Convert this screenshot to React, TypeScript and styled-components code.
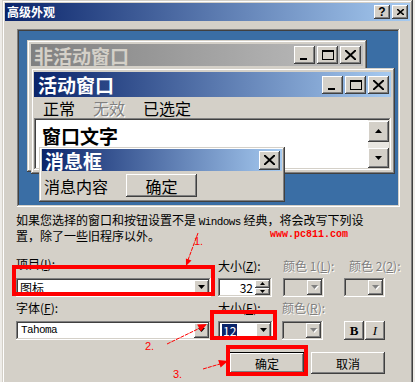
import React from "react";
import styled, { createGlobalStyle, css } from "styled-components";

const face = "#d4d0c8";
const light = "#ffffff";
const shade = "#808080";
const dark = "#404040";

const raised = css`
  box-shadow: inset -1px -1px ${dark}, inset 1px 1px ${light},
    inset -2px -2px ${shade}, inset 2px 2px ${face};
`;

const windowEdge = css`
  box-shadow: inset -1px -1px ${dark}, inset 1px 1px ${face},
    inset -2px -2px ${shade}, inset 2px 2px ${light};
`;

const sunken = css`
  box-shadow: inset -1px -1px ${light}, inset 1px 1px ${shade},
    inset -2px -2px ${face}, inset 2px 2px ${dark};
`;

const GlobalStyle = createGlobalStyle`
  html, body {
    margin: 0;
    padding: 0;
  }
  body {
    background: #eeece8;
    font-family: "Noto Sans CJK SC", "Liberation Sans", sans-serif;
    font-size: 12px;
    color: #000;
  }
`;

const Screen = styled.div`
  position: relative;
  width: 415px;
  height: 382px;
  overflow: hidden;
  padding-left: 2px;
  box-sizing: border-box;
`;

const Dialog = styled.div`
  width: 411px;
  height: 386px;
  box-sizing: border-box;
  padding: 3px;
  background: ${face};
  ${windowEdge}
  display: flex;
  flex-direction: column;
`;

const TitleBar = styled.div<{ $active?: boolean; $h: number; $left?: number }>`
  height: ${(p) => p.$h}px;
  flex-shrink: 0;
  display: flex;
  align-items: center;
  justify-content: space-between;
  padding: 0 2px 0 ${(p) => p.$left ?? 2}px;
  background: ${(p) =>
    p.$active
      ? "linear-gradient(to right, #0a246a, #a6caf0)"
      : "linear-gradient(to right, #808080, #c0c0c0)"};
`;

const TitleText = styled.span<{ $size: number; $active?: boolean }>`
  font-size: ${(p) => p.$size}px;
  font-weight: bold;
  line-height: 1;
  white-space: nowrap;
  color: ${(p) => (p.$active ? "#fff" : face)};
`;

const TitleButtons = styled.div<{ $gap: number }>`
  display: flex;
  gap: ${(p) => p.$gap}px;
`;

const CapButton = styled.div<{ $w: number; $h: number }>`
  width: ${(p) => p.$w}px;
  height: ${(p) => p.$h}px;
  background: ${face};
  ${raised}
  display: flex;
  align-items: center;
  justify-content: center;
  font-family: "Liberation Sans", sans-serif;
  font-weight: bold;
  font-size: 12px;
  line-height: 1;
`;

const Body = styled.div`
  display: flex;
  flex-direction: column;
`;

const Preview = styled.div`
  position: relative;
  flex-shrink: 0;
  margin: 8px 0 0 12px;
  width: 383px;
  height: 178px;
  background: #3a6ea5;
  ${sunken}
`;

const Frame = styled.div<{ $x: number; $y: number; $w: number; $h?: number; $pad: string }>`
  position: absolute;
  left: ${(p) => p.$x}px;
  top: ${(p) => p.$y}px;
  width: ${(p) => p.$w}px;
  height: ${(p) => (p.$h ? `${p.$h}px` : "auto")};
  box-sizing: border-box;
  padding: ${(p) => p.$pad};
  background: ${face};
  ${windowEdge}
  display: flex;
  flex-direction: column;
`;

const MenuBar = styled.div`
  height: 21px;
  display: flex;
  align-items: center;
  gap: 18px;
  padding-left: 9px;
  font-size: 16px;
  line-height: 1;
`;

const MenuItem = styled.span<{ $disabled?: boolean }>`
  color: ${(p) => (p.$disabled ? shade : "#000")};
  text-shadow: ${(p) => (p.$disabled ? "1px 1px #fff" : "none")};
`;

const TextPane = styled.div`
  height: 52px;
  box-sizing: border-box;
  padding: 2px;
  background: #fff;
  ${sunken}
  display: flex;
`;

const PaneText = styled.div`
  flex: 1;
  padding: 6px 0 0 6px;
  font-size: 19px;
  font-weight: bold;
  line-height: 1;
`;

const ScrollBar = styled.div`
  width: 21px;
  display: flex;
  flex-direction: column;
  justify-content: space-between;
  padding-top: 1px;
  background: #e9e7e2;
`;

const ScrollButton = styled.div<{ $h: number }>`
  height: ${(p) => p.$h}px;
  background: ${face};
  ${raised}
  display: flex;
  align-items: center;
  justify-content: center;
`;

const MsgBody = styled.div`
  flex: 1;
  display: flex;
  align-items: center;
  padding: 1px 0 0 2px;
  font-size: 16px;
  line-height: 1;
`;

const MsgButton = styled.div`
  margin-left: 18px;
  width: 71px;
  height: 23px;
  background: ${face};
  ${raised}
  display: flex;
  align-items: center;
  justify-content: center;
`;

const Hint = styled.p`
  margin: 6px 0 0 11px;
  font-size: 12px;
  line-height: 13px;
  white-space: nowrap;
`;

const Mono = styled.span`
  font-family: "Liberation Mono", monospace;
  font-size: 11px;
  letter-spacing: -0.6px;
`;

const FieldRow = styled.div<{ $top: number }>`
  display: flex;
  align-items: flex-end;
  margin: ${(p) => p.$top}px 0 0 11px;
`;

const Field = styled.div<{ $w: number; $ml?: number; $gap: number }>`
  width: ${(p) => p.$w}px;
  margin-left: ${(p) => p.$ml ?? 0}px;
  display: flex;
  flex-direction: column;
  gap: ${(p) => p.$gap}px;
`;

const Label = styled.span<{ $disabled?: boolean; $indent?: number }>`
  height: 14px;
  line-height: 14px;
  font-size: 12px;
  white-space: nowrap;
  padding-left: ${(p) => p.$indent ?? 0}px;
  color: ${(p) => (p.$disabled ? shade : "#000")};
  text-shadow: ${(p) => (p.$disabled ? "1px 1px #fff" : "none")};
`;

const Combo = styled.div<{ $disabled?: boolean }>`
  height: 19px;
  box-sizing: border-box;
  padding: 2px;
  background: ${(p) => (p.$disabled ? face : "#fff")};
  ${sunken}
  display: flex;
`;

const ComboValue = styled.span<{ $mono?: boolean }>`
  flex: 1;
  display: flex;
  align-items: center;
  padding-left: ${(p) => (p.$mono ? 3 : 2)}px;
  font-size: ${(p) => (p.$mono ? 11 : 12)}px;
  font-family: ${(p) =>
    p.$mono ? `"Liberation Mono", monospace` : `"Noto Sans CJK SC", sans-serif`};
  letter-spacing: ${(p) => (p.$mono ? "-0.6px" : "0")};
  line-height: 1;
`;

const DropButton = styled.span`
  width: 15px;
  background: ${face};
  ${raised}
  display: flex;
  align-items: center;
  justify-content: center;
`;

const Selected = styled.span`
  background: #0a246a;
  color: #fff;
  padding: 0 1px;
  line-height: 13px;
`;

const Spin = styled.div`
  width: 54px;
  height: 19px;
  box-sizing: border-box;
  padding: 2px;
  background: #fff;
  ${sunken}
  display: flex;
`;

const SpinValue = styled.span`
  flex: 1;
  text-align: right;
  padding-right: 2px;
  line-height: 15px;
  font-size: 12px;
`;

const SpinButtons = styled.div`
  width: 15px;
  display: flex;
  flex-direction: column;
`;

const SpinButton = styled.span`
  flex: 1;
  background: ${face};
  ${raised}
  display: flex;
  align-items: center;
  justify-content: center;
`;

const StyleGroup = styled.div`
  display: flex;
  gap: 1px;
`;

const StyleButton = styled.div<{ $italic?: boolean }>`
  width: 20px;
  height: 19px;
  background: ${face};
  ${raised}
  display: flex;
  align-items: center;
  justify-content: center;
  font-family: "Liberation Serif", serif;
  font-size: 13px;
  font-weight: ${(p) => (p.$italic ? "normal" : "bold")};
  font-style: ${(p) => (p.$italic ? "italic" : "normal")};
`;

const Actions = styled.div`
  display: flex;
  justify-content: flex-end;
  gap: 6px;
  margin: 12px 25px 0 0;
`;

const PushButton = styled.div<{ $default?: boolean; $w: number }>`
  width: ${(p) => p.$w}px;
  height: 22px;
  box-sizing: border-box;
  background: ${face};
  display: flex;
  align-items: center;
  justify-content: center;
  font-size: 12px;
  ${(p) =>
    p.$default
      ? css`
          box-shadow: inset 0 0 0 1px #000, inset -2px -2px ${dark},
            inset 2px 2px ${light}, inset -3px -3px ${shade};
        `
      : raised}
`;

const Mark = styled.div<{ $x: number; $y: number; $w: number; $h: number }>`
  position: absolute;
  left: ${(p) => p.$x}px;
  top: ${(p) => p.$y}px;
  width: ${(p) => p.$w}px;
  height: ${(p) => p.$h}px;
  box-sizing: border-box;
  border: 4px solid #ff0000;
  pointer-events: none;
`;

const Tag = styled.span<{ $x: number; $y: number }>`
  position: absolute;
  left: ${(p) => p.$x}px;
  top: ${(p) => p.$y}px;
  color: #ff0000;
  font-family: "Liberation Sans", sans-serif;
  font-size: 11px;
  line-height: 1;
`;

const Watermark = styled.span`
  position: absolute;
  left: 270px;
  top: 230px;
  color: #ff0000;
  font-family: "Liberation Mono", monospace;
  font-size: 10px;
  font-weight: bold;
  line-height: 1;
`;

const Arrows = styled.svg`
  position: absolute;
  left: 0;
  top: 0;
  pointer-events: none;
`;

function CloseGlyph({ w, h, s }: { w: number; h: number; s: number }) {
  return (
    <svg width={w} height={h} viewBox={`0 0 ${w} ${h}`}>
      <path d={`M0 0 L${w} ${h} M${w} 0 L0 ${h}`} stroke="#000" strokeWidth={s} />
    </svg>
  );
}

function MinGlyph() {
  return (
    <svg width="11" height="10" viewBox="0 0 11 10" shapeRendering="crispEdges">
      <rect x="1" y="8" width="7" height="2" fill="#000" />
    </svg>
  );
}

function MaxGlyph() {
  return (
    <svg width="12" height="10" viewBox="0 0 12 10" shapeRendering="crispEdges">
      <rect x="0.5" y="0.5" width="11" height="9" fill="none" stroke="#000" />
      <rect x="0" y="0" width="12" height="2" fill="#000" />
    </svg>
  );
}

function Tri({ up, grey }: { up?: boolean; grey?: boolean }) {
  const pts = up ? "0,4 7,4 3.5,0" : "0,0 7,0 3.5,4";
  return (
    <svg width="8" height="5" viewBox="0 0 8 5">
      {grey && <polygon points={pts} fill="#fff" transform="translate(1 1)" />}
      <polygon points={pts} fill={grey ? shade : "#000"} />
    </svg>
  );
}

function TinyTri({ up }: { up?: boolean }) {
  return (
    <svg width="5" height="3" viewBox="0 0 5 3">
      <polygon points={up ? "0,3 5,3 2.5,0" : "0,0 5,0 2.5,3"} fill="#000" />
    </svg>
  );
}

function WindowButtons({ gap }: { gap: number }) {
  return (
    <TitleButtons $gap={gap}>
      <CapButton $w={21} $h={18}>
        <MinGlyph />
      </CapButton>
      <CapButton $w={21} $h={18}>
        <MaxGlyph />
      </CapButton>
      <CapButton $w={21} $h={18}>
        <CloseGlyph w={11} h={10} s={2} />
      </CapButton>
    </TitleButtons>
  );
}

function Drop({ disabled }: { disabled?: boolean }) {
  return (
    <DropButton>
      <Tri grey={disabled} />
    </DropButton>
  );
}

export default function App() {
  return (
    <>
      <GlobalStyle />
      <Screen>
        <Dialog>
          <TitleBar $active $h={18} $left={2}>
            <TitleText $size={12} $active>
              高级外观
            </TitleText>
            <TitleButtons $gap={2}>
              <CapButton $w={16} $h={14}>?</CapButton>
              <CapButton $w={16} $h={14}>
                <CloseGlyph w={7} h={6} s={1.6} />
              </CapButton>
            </TitleButtons>
          </TitleBar>

          <Body>
            <Preview>
              <Frame $x={10} $y={11} $w={340} $h={132} $pad="4px">
                <TitleBar $h={22} $left={3}>
                  <TitleText $size={19}>非活动窗口</TitleText>
                  <WindowButtons gap={2} />
                </TitleBar>
              </Frame>

              <Frame $x={14} $y={39} $w={364} $pad="4px 4px 4px 3px">
                <TitleBar $active $h={25} $left={4}>
                  <TitleText $size={19} $active>
                    活动窗口
                  </TitleText>
                  <WindowButtons gap={2} />
                </TitleBar>
                <MenuBar>
                  <MenuItem>正常</MenuItem>
                  <MenuItem $disabled>无效</MenuItem>
                  <MenuItem>已选定</MenuItem>
                </MenuBar>
                <TextPane>
                  <PaneText>窗口文字</PaneText>
                  <ScrollBar>
                    <ScrollButton $h={21}>
                      <Tri up />
                    </ScrollButton>
                    <ScrollButton $h={20}>
                      <Tri />
                    </ScrollButton>
                  </ScrollBar>
                </TextPane>
              </Frame>

              <Frame $x={22} $y={118} $w={246} $h={55} $pad="2px 3px 3px">
                <TitleBar $active $h={22} $left={3}>
                  <TitleText $size={19} $active>
                    消息框
                  </TitleText>
                  <CapButton $w={21} $h={19}>
                    <CloseGlyph w={11} h={10} s={2} />
                  </CapButton>
                </TitleBar>
                <MsgBody>
                  消息内容
                  <MsgButton>确定</MsgButton>
                </MsgBody>
              </Frame>
            </Preview>

            <Hint>
              如果您选择的窗口和按钮设置不是 <Mono>Windows</Mono> 经典，将会改写下列设
              <br />
              置，除了一些旧程序以外。
            </Hint>

            <FieldRow $top={15}>
              <Field $w={195} $gap={7}>
                <Label>
                  项目(<u>I</u>):
                </Label>
                <Combo>
                  <ComboValue>图标</ComboValue>
                  <Drop />
                </Combo>
              </Field>
              <Field $w={55} $ml={7} $gap={5}>
                <Label>
                  大小(<u>Z</u>):
                </Label>
                <Spin>
                  <SpinValue>32</SpinValue>
                  <SpinButtons>
                    <SpinButton>
                      <TinyTri up />
                    </SpinButton>
                    <SpinButton>
                      <TinyTri />
                    </SpinButton>
                  </SpinButtons>
                </Spin>
              </Field>
              <Field $w={41} $ml={10} $gap={5}>
                <Label $disabled>
                  颜色 1(<u>L</u>):
                </Label>
                <Combo $disabled>
                  <ComboValue />
                  <Drop disabled />
                </Combo>
              </Field>
              <Field $w={41} $ml={20} $gap={5}>
                <Label $disabled $indent={5}>
                  颜色 2(<u>2</u>):
                </Label>
                <Combo $disabled>
                  <ComboValue />
                  <Drop disabled />
                </Combo>
              </Field>
            </FieldRow>

            <FieldRow $top={4}>
              <Field $w={195} $gap={6}>
                <Label>
                  字体(<u>F</u>):
                </Label>
                <Combo>
                  <ComboValue $mono>Tahoma</ComboValue>
                  <Drop />
                </Combo>
              </Field>
              <Field $w={55} $ml={7} $gap={6}>
                <Label>
                  大小(<u>E</u>):
                </Label>
                <Combo>
                  <ComboValue>
                    <Selected>12</Selected>
                  </ComboValue>
                  <Drop />
                </Combo>
              </Field>
              <Field $w={41} $ml={9} $gap={6}>
                <Label $disabled>
                  颜色(<u>R</u>):
                </Label>
                <Combo $disabled>
                  <ComboValue />
                  <Drop disabled />
                </Combo>
              </Field>
              <Field $w={41} $ml={21} $gap={6}>
                <Label />
                <StyleGroup>
                  <StyleButton>B</StyleButton>
                  <StyleButton $italic>I</StyleButton>
                </StyleGroup>
              </Field>
            </FieldRow>

            <Actions>
              <PushButton $default $w={76}>
                确定
              </PushButton>
              <PushButton $w={74}>取消</PushButton>
            </Actions>
          </Body>
        </Dialog>

        <Watermark>www.pc811.com</Watermark>
        <Mark $x={12} $y={265} $w={203} $h={31} />
        <Mark $x={210} $y={310} $w={67} $h={30} />
        <Mark $x={226} $y={345} $w={82} $h={31} />
        <Tag $x={194} $y={236}>1.</Tag>
        <Tag $x={145} $y={341}>2.</Tag>
        <Tag $x={173} $y={369}>3.</Tag>
        <Arrows width={415} height={382} viewBox="0 0 415 382">
          <g stroke="#ff0000" strokeWidth="1" strokeDasharray="4 1" fill="none">
            <line x1="198" y1="233" x2="188" y2="260" />
            <line x1="167" y1="344" x2="200" y2="328" />
            <line x1="203" y1="369" x2="220" y2="364" />
          </g>
          <g fill="#ff0000">
            <polygon points="186,266 191.5,260.6 185.9,258.4" />
            <polygon points="207,324 200.8,331.6 197.2,324.4" />
            <polygon points="228,361 220.6,367.5 218.2,359.9" />
          </g>
        </Arrows>
      </Screen>
    </>
  );
}
